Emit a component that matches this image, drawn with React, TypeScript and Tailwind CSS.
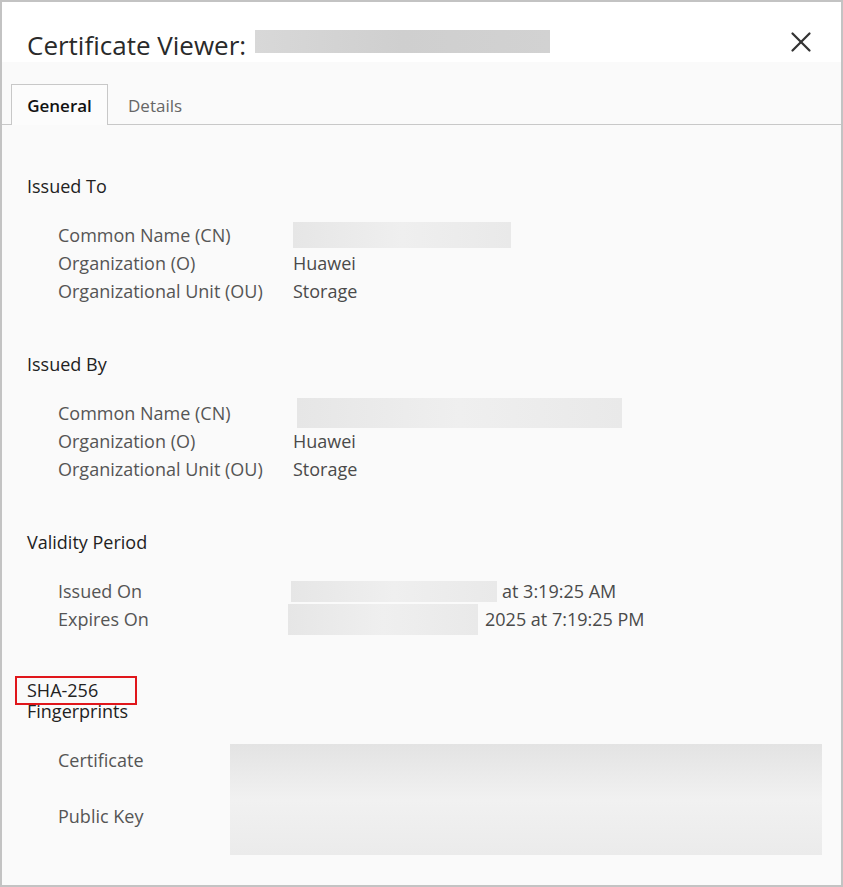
import { X } from "lucide-react";

const font = { fontFamily: '"Open Sans", "Noto Sans", sans-serif' };

const Redacted = ({ className }: { className: string }) => (
  <span
    className={`inline-block align-middle bg-gradient-to-r from-[#e6e6e6] via-[#efefef] to-[#e9e9e9] ${className}`}
  />
);

const Row = ({ label, children }: { label: string; children?: React.ReactNode }) => (
  <div className="flex h-[28px] items-center">
    <div className="w-[235px] shrink-0 text-[#555]">{label}</div>
    <div className="flex items-center text-[#4a4a4a]">{children}</div>
  </div>
);

const Section = ({ title, children }: { title: React.ReactNode; children: React.ReactNode }) => (
  <section>
    <h3 className="leading-[24px] text-[#222]">{title}</h3>
    <div className="mt-[23px] pl-[31px]">{children}</div>
  </section>
);

export default function App() {
  return (
    <div style={font} className="h-[887px] w-[843px] border-2 border-[#c3c3c3] bg-[#fafafa] text-[18px]">
      {/* header */}
      <header className="flex h-[60px] items-start justify-between bg-white pl-[25px] pr-[23px] pt-[25px]">
        <div className="flex items-center gap-[9px] text-[26px] leading-[36px] text-[#2a2a2a]">
          <span>Certificate Viewer:</span>
          <span className="-mt-[7px] inline-block h-[23px] w-[295px] bg-gradient-to-r from-[#d8d8d8] via-[#cfcfcf] to-[#d2d2d2]" />
        </div>
        <X className="-mt-[2px] h-[34px] w-[34px] text-[#333]" strokeWidth={1.6} />
      </header>

      {/* tabs */}
      <nav className="mt-[22px] flex h-[41px] items-end border-b border-[#c8c8c8] pl-[9px]">
        <div className="-mb-px flex h-[41px] w-[97px] items-center justify-center border border-b-0 border-[#c8c8c8] bg-[#fcfcfc] pt-[2px] text-[17px] font-semibold text-[#111]">
          General
        </div>
        <div className="flex h-[40px] items-center px-[20px] pt-[3px] text-[17px] text-[#666]">Details</div>
      </nav>

      <div className="pl-[25px] pr-[19px] pt-[49px]">
        <Section title="Issued To">
          <Row label="Common Name (CN)">
            <Redacted className="h-[26px] w-[218px]" />
          </Row>
          <Row label="Organization (O)">Huawei</Row>
          <Row label="Organizational Unit (OU)">Storage</Row>
        </Section>

        <div className="h-[47px]" />
        <Section title="Issued By">
          <Row label="Common Name (CN)">
            <Redacted className="ml-[4px] h-[30px] w-[325px]" />
          </Row>
          <Row label="Organization (O)">Huawei</Row>
          <Row label="Organizational Unit (OU)">Storage</Row>
        </Section>

        <div className="h-[47px]" />
        <Section title="Validity Period">
          <Row label="Issued On">
            <Redacted className="-ml-[2px] h-[21px] w-[206px]" />
            <span className="ml-[5px]">at 3:19:25 AM</span>
          </Row>
          <Row label="Expires On">
            <Redacted className="-ml-[5px] h-[31px] w-[190px]" />
            <span className="ml-[7px]">2025 at 7:19:25 PM</span>
          </Row>
        </Section>

        <section className="mt-[47px]">
          <div className="relative leading-[21px] text-[#222]">
            <span className="absolute -left-[12px] -top-[4px] h-[29px] w-[122px] border-2 border-[#e0161b]" />
            SHA-256
            <br />
            Fingerprints
          </div>
          <div className="mt-[22px] flex pl-[31px]">
            <div className="w-[172px] shrink-0 text-[#555]">
              <div className="mt-[4px] leading-[24px]">Certificate</div>
              <div className="mt-[32px] leading-[24px]">Public Key</div>
            </div>
            <div className="h-[111px] w-[592px] bg-gradient-to-b from-[#e3e3e3] via-[#f1f1f1] to-[#ebebeb]" />
          </div>
        </section>
      </div>
    </div>
  );
}
